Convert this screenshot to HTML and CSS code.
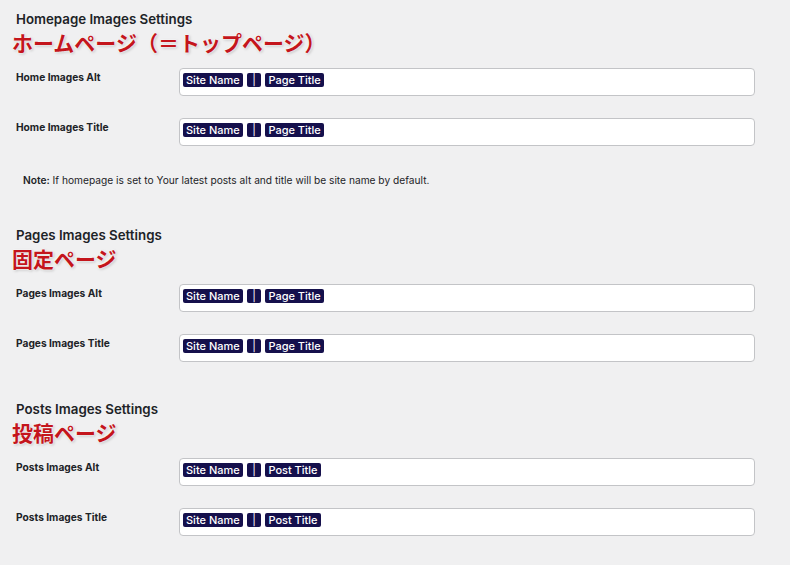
FILE: index.html
```html
<!DOCTYPE html>
<html lang="ja">
<head>
    <meta charset="UTF-8">
    <meta name="viewport" content="width=device-width, initial-scale=1.0">
    <title>Images Settings</title>
    <link rel="stylesheet" href="styles.css">
</head>
<body>
    <div class="section">
        <h2>Homepage Images Settings</h2>
        <div class="jp">ホームページ（＝トップページ）</div>
        <div class="row">
            <div class="label">Home Images Alt</div>
            <div class="field">
                <span class="tag">Site Name</span>
                <span class="tag sep">|</span>
                <span class="tag">Page Title</span>
            </div>
        </div>
        <div class="row">
            <div class="label">Home Images Title</div>
            <div class="field">
                <span class="tag">Site Name</span>
                <span class="tag sep">|</span>
                <span class="tag">Page Title</span>
            </div>
        </div>
        <p class="note"><b>Note:</b> If homepage is set to Your latest posts alt and title will be site name by default.</p>
    </div>

    <div class="section">
        <h2>Pages Images Settings</h2>
        <div class="jp">固定ページ</div>
        <div class="row">
            <div class="label">Pages Images Alt</div>
            <div class="field">
                <span class="tag">Site Name</span>
                <span class="tag sep">|</span>
                <span class="tag">Page Title</span>
            </div>
        </div>
        <div class="row">
            <div class="label">Pages Images Title</div>
            <div class="field">
                <span class="tag">Site Name</span>
                <span class="tag sep">|</span>
                <span class="tag">Page Title</span>
            </div>
        </div>
    </div>

    <div class="section">
        <h2>Posts Images Settings</h2>
        <div class="jp">投稿ページ</div>
        <div class="row">
            <div class="label">Posts Images Alt</div>
            <div class="field">
                <span class="tag">Site Name</span>
                <span class="tag sep">|</span>
                <span class="tag">Post Title</span>
            </div>
        </div>
        <div class="row">
            <div class="label">Posts Images Title</div>
            <div class="field">
                <span class="tag">Site Name</span>
                <span class="tag sep">|</span>
                <span class="tag">Post Title</span>
            </div>
        </div>
    </div>
</body>
</html>
```

FILE: styles.css
```css
body {
    margin: 0;
    padding: 10px 16px 0;
    background-color: #f0f0f1;
    color: #1d2327;
    font-family: Inter, "Noto Sans", sans-serif;
}
.section {
    margin-bottom: 38px;
}
h2 {
    margin: 0;
    font-size: 13.3px;
    font-weight: 600;
    line-height: 19px;
}
.jp {
    margin: 0 0 13px -4px;
    font-family: "Noto Sans CJK JP", sans-serif;
    font-size: 21px;
    font-weight: 700;
    line-height: 26px;
    color: #c4151c;
    text-shadow: 0 0 2px #fff, 0 0 2px #fff, 1px 1px 3px rgba(0, 0, 0, 0.25);
}
.row {
    display: flex;
    margin-bottom: 22px;
}
.row:last-child {
    margin-bottom: 0;
}
.label {
    width: 163px;
    padding-top: 1px;
    font-size: 10.2px;
    font-weight: 700;
    line-height: 16px;
}
.field {
    box-sizing: border-box;
    width: 576px;
    height: 28px;
    padding: 4px 3px;
    display: flex;
    align-items: flex-start;
    gap: 4.5px;
    background-color: #fff;
    border: 1px solid #c3c4c7;
    border-radius: 4px;
}
.tag {
    padding: 0 3px;
    height: 14px;
    line-height: 14px;
    font-size: 11px;
    font-weight: 500;
    color: #fff;
    background-color: #15104c;
    border-radius: 2px;
}
.sep {
    padding: 0 5px;
    font-weight: 400;
}
.note {
    margin: 26px 0 0 7px;
    font-size: 10.2px;
    line-height: 16px;
}
.note b {
    font-weight: 600;
}
```
